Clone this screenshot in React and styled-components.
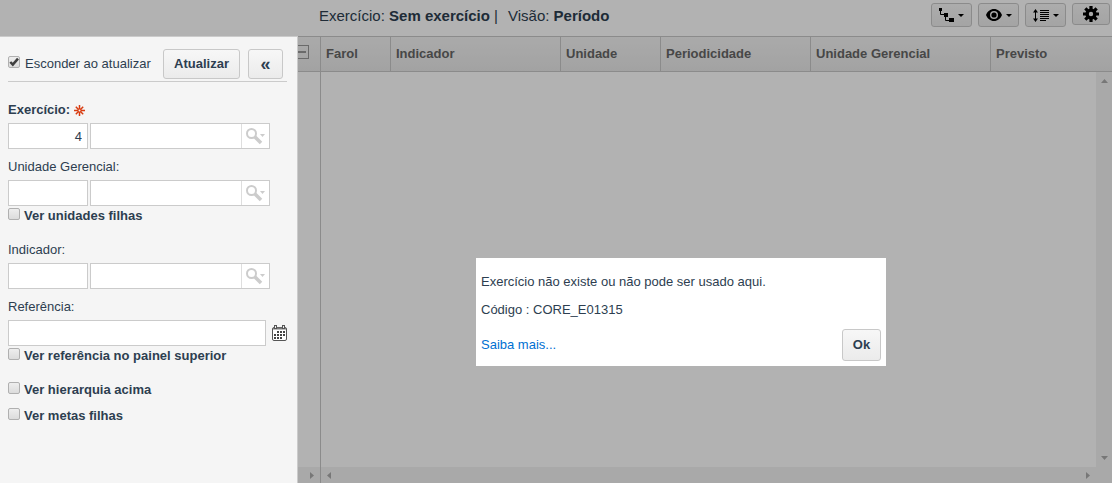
import {useState} from "react";
import styled, {createGlobalStyle, css} from "styled-components";

const GlobalStyle = createGlobalStyle`
  * {
    box-sizing: border-box;
  }
  body {
    margin: 0;
    background: #fff;
    color: #2d3e50;
    font: 13px/16px "Liberation Sans", Arial, sans-serif;
  }
  input, button {
    font: inherit;
    color: inherit;
  }
  svg {
    display: block;
    flex-shrink: 0;
  }
`;

const Page = styled.div`
  display: flex;
  flex-direction: column;
  height: 100vh;
  overflow: hidden;
`;

// Top bar
const TopBar = styled.header`
  display: flex;
  justify-content: space-between;
  height: 36px;
  padding: 3px 2px 0 319px;
`;

const Summary = styled.div`
  display: flex;
  gap: 10px;
  font-size: 15px;
  line-height: 26px;
  white-space: nowrap;
`;

const Tools = styled.div`
  display: flex;
  align-items: flex-start;
  gap: 6px;
`;

const ButtonBase = styled.button`
  display: flex;
  align-items: center;
  justify-content: center;
  padding: 0;
  border: 1px solid #c8c8c8;
  border-radius: 3px;
  background: linear-gradient(#f7f7f7, #ebebeb);
  font-weight: bold;
  cursor: pointer;
`;

const ToolButton = styled(ButtonBase)`
  gap: 4px;
  width: ${props => props.$single ? "38px" : "41px"};
  height: ${props => props.$single ? "22px" : "24px"};
  color: #000;
`;

// Grid
const Body = styled.main`
  position: relative;
  display: flex;
  flex: 1;
  min-height: 0;
`;

const Pane = styled.section`
  display: flex;
  flex-direction: column;
  ${props => props.$frozen ? css`
    width: 321px;
    border-right: 1px solid #c8c8c8;
  ` : css`
    flex: 1;
    min-width: 0;
  `}
`;

const headerCell = css`
  height: 36px;
  border-top: 1px solid #c8c8c8;
  border-bottom: 1px solid #c8c8c8;
  background: linear-gradient(#f4f4f4, #e9e9e9);
`;

const FrozenHeader = styled.div`
  ${headerCell}
  display: flex;
  align-items: center;
  justify-content: flex-end;
  padding: 0 11px 4px 0;
`;

const CollapseButton = styled.button`
  width: 14px;
  height: 14px;
  padding: 0;
  border: 1px solid #999;
  background: none;
  svg {
    margin: 0 auto;
  }
`;

const Table = styled.table`
  width: 100%;
  table-layout: fixed;
  border-collapse: separate;
  border-spacing: 0;
`;

const Th = styled.th`
  ${headerCell}
  width: ${props => props.$width ? `${props.$width}px` : "auto"};
  padding: 0 5px;
  border-right: ${props => props.$width ? "1px solid #c8c8c8" : "0"};
  color: #666;
  text-align: left;
  white-space: nowrap;
`;

const Rows = styled.div`
  display: flex;
  flex: 1;
  justify-content: flex-end;
`;

const ScrollTrack = styled.div`
  display: flex;
  justify-content: space-between;
  align-items: center;
  color: #ababab;
  background: #f3f3f3;
  ${props => props.$vertical ? css`
    flex-direction: column;
    width: 16px;
    padding: 7px 0;
  ` : css`
    height: 16px;
    padding: 0 ${props.$frozen ? "6px" : "22px"} 0 6px;
  `}
`;

// Filter drawer, stays above the backdrop
const Drawer = styled.aside`
  position: absolute;
  z-index: 20;
  top: 0;
  bottom: 0;
  left: 0;
  width: 298px;
  padding: 12px 8px 0;
  border-top: 1px solid #cbcbcb;
  border-right: 1px solid #cbcbcb;
  background: #f5f5f5;
`;

const DrawerHeader = styled.div`
  display: flex;
  gap: 8px;
  width: 279px;
  margin-bottom: 20px;
  padding: 0 4px 2px 0;
  border-bottom: 1px solid #cbcbcb;
`;

const DrawerButton = styled(ButtonBase)`
  width: ${props => props.$icon ? "35px" : "77px"};
  height: 30px;
  font-size: ${props => props.$icon ? "18px" : "13px"};
`;

const CheckLabel = styled.label`
  display: flex;
  gap: 4px;
  font-weight: ${props => props.$light ? "normal" : "bold"};
  white-space: nowrap;
  ${props => props.$light && css`
    flex: 1;
    gap: 5px;
    padding-top: 7px;
  `}
`;

const Checkbox = styled.input`
  appearance: none;
  flex-shrink: 0;
  width: 12px;
  height: 12px;
  margin: 0;
  border: 1px solid #b0b0b0;
  border-radius: 2px;
  background: linear-gradient(#eee, #dcdcdc);
  &:checked {
    background: url("data:image/svg+xml,%3Csvg xmlns='http://www.w3.org/2000/svg' viewBox='0 0 10 10'%3E%3Cpath d='M1.3 5L3.8 7.6L9 1.6' fill='none' stroke='%23404040' stroke-width='2.5'/%3E%3C/svg%3E"), linear-gradient(#eee, #dcdcdc);
  }
`;

const FilterList = styled.div`
  display: flex;
  flex-direction: column;
  gap: 18px;
`;

const FilterGroup = styled.div`
  display: flex;
  flex-direction: column;
  gap: ${props => props.$tight ? "2px" : "10px"};
`;

const FieldBox = styled.div`
  display: flex;
  flex-direction: column;
  gap: 5px;
`;

const FieldLabel = styled.label`
  display: flex;
  align-items: center;
  gap: 4px;
  font-weight: ${props => props.$required ? "bold" : "normal"};
`;

const FieldRow = styled.div`
  display: flex;
  align-items: center;
  gap: ${props => props.$gap}px;
`;

const Input = styled.input`
  width: ${props => props.$width}px;
  height: 26px;
  padding: 0 5px;
  border: 1px solid #cbcbcb;
  background: #fff;
  text-align: ${props => props.$right ? "right" : "left"};
`;

const Lookup = styled.div`
  display: flex;
  width: 180px;
  height: 26px;
  border: 1px solid #cbcbcb;
  background: #fff;
  input {
    flex: 1;
    min-width: 0;
    padding: 0 5px;
    border: 0;
    background: none;
  }
`;

const LookupButton = styled.button`
  width: 28px;
  padding: 0 0 0 4px;
  border: 0;
  border-left: 1px solid #dedede;
  background: none;
`;

const CalendarButton = styled.button`
  padding: 0;
  border: 0;
  background: none;
`;

// Message dialog
const Backdrop = styled.div`
  position: fixed;
  z-index: 10;
  inset: 0;
  display: flex;
  align-items: center;
  justify-content: center;
  padding: 141px 0 0 250px;
  background: rgba(0, 0, 0, 0.3);
`;

const Dialog = styled.div`
  display: flex;
  flex-direction: column;
  width: 410px;
  padding: 14px 5px 5px;
  background: #fff;
  line-height: 20px;
  p {
    margin: 0;
  }
  p + p {
    margin-top: 8px;
  }
`;

const DialogFooter = styled.div`
  display: flex;
  align-items: center;
  justify-content: space-between;
  margin-top: 9px;
  a {
    color: #0070d2;
    text-decoration: none;
  }
`;

const OkButton = styled(ButtonBase)`
  width: 39px;
  height: 32px;
`;

const Caret = () => (
  <svg width="6" height="3" viewBox="0 0 6 3"><path d="M0 0h6L3 3z" fill="currentColor" /></svg>
);

const arrows = {
  up: "M0 4h7L3.5 0z",
  down: "M0 0h7L3.5 4z",
  left: "M4 0v7L0 3.5z",
  right: "M0 0v7l4-3.5z",
};

function Arrow({dir}) {
  const vertical = dir === "up" || dir === "down";
  return (
    <svg width={vertical ? 7 : 4} height={vertical ? 4 : 7}>
      <path d={arrows[dir]} fill="currentColor" />
    </svg>
  );
}

const TreeIcon = () => (
  <svg width="15" height="15" viewBox="0 0 15 15">
    <path d="M0 0h3v3H0zM5 5h4v4H5zM10 10h5v4h-5z" fill="currentColor" />
    <path d="M1.5 2v4.500H6M6.500 8v4.500H11" fill="none" stroke="currentColor" />
  </svg>
);

const EyeIcon = () => (
  <svg width="16" height="12" viewBox="0 0 16 12">
    <path fillRule="evenodd" fill="currentColor" d="M8 0C4.3 0 1.4 2.5 0 6c1.4 3.5 4.3 6 8 6s6.6-2.5 8-6c-1.4-3.5-4.3-6-8-6zm0 2a4 4 0 1 1 0 8 4 4 0 0 1 0-8z" />
    <circle cx="8" cy="6" r="2.6" fill="currentColor" />
  </svg>
);

const LinesIcon = () => (
  <svg width="16" height="13" viewBox="0 0 16 13">
    <path d="M2.5 2v9" stroke="currentColor" />
    <path d="M0 3.5L2.5 0L5 3.5zM0 9.5L2.5 13L5 9.500z" fill="currentColor" />
    <path d="M7 1.500h9M7 3.500h9M7 5.500h9M7 7.500h9M7 9.500h9M7 11.500h6" stroke="currentColor" />
  </svg>
);

const GearIcon = () => (
  <svg width="16" height="16" viewBox="-8 -8 16 16">
    <circle r="3.9" fill="none" stroke="currentColor" strokeWidth="3.4" />
    {[0, 45, 90, 135].map(angle => (
      <path key={angle} d="M-1.6-8h3.2v3.500h-3.2zM-1.6 4.500h3.2V8h-3.2z" fill="currentColor" transform={`rotate(${angle})`} />
    ))}
  </svg>
);

const RequiredIcon = () => (
  <svg width="11" height="12" viewBox="0 0 11 12">
    <path d="M5.5 1v11M0 6.5h11M1.8 2.8l7.4 7.4M9.2 2.8l-7.4 7.4" stroke="#d83b10" strokeWidth="1.5" />
    <circle cx="5.5" cy="6.5" r="1" fill="#f5f5f5" />
  </svg>
);

const SearchIcon = () => (
  <svg width="20" height="17" viewBox="0 0 20 17">
    <circle cx="5.5" cy="5.5" r="4.5" fill="none" stroke="#ccc" strokeWidth="2" />
    <path d="M9 9l6 6" stroke="#ccc" strokeWidth="3.6" />
    <path d="M14 6h5l-2.5 3z" fill="#ccc" />
  </svg>
);

const CalendarIcon = () => (
  <svg width="15" height="16" viewBox="0 0 15 16">
    <rect x="0.5" y="2.5" width="14" height="13" rx="1.5" fill="#fff" stroke="#555" />
    <path d="M1 3.5h13" stroke="#777" strokeWidth="2" />
    <rect x="2.5" y="0.5" width="2" height="3" fill="#eee" stroke="#555" />
    <rect x="10.5" y="0.5" width="2" height="3" fill="#eee" stroke="#555" />
    <path d="M5 7h8M2 10h11M2 13h8" stroke="#444" strokeWidth="2" strokeDasharray="2 1" />
  </svg>
);

const columns = [
  {name: "Farol", width: 70},
  {name: "Indicador", width: 170},
  {name: "Unidade", width: 100},
  {name: "Periodicidade", width: 150},
  {name: "Unidade Gerencial", width: 180},
  {name: "Previsto"},
];

function LookupField({id, label, required, value = ""}) {
  const [code, setCode] = useState(value);
  return (
    <FieldBox>
      <FieldLabel htmlFor={id} $required={required}>
        {label}:{required && <RequiredIcon />}
      </FieldLabel>
      <FieldRow $gap={2}>
        <Input id={id} $width={80} $right value={code} onChange={ev => setCode(ev.target.value)} />
        <Lookup>
          <input aria-label={label} />
          <LookupButton type="button" aria-label={`Pesquisar ${label}`}><SearchIcon /></LookupButton>
        </Lookup>
      </FieldRow>
    </FieldBox>
  );
}

function Check({label}) {
  return (
    <CheckLabel>
      <Checkbox type="checkbox" />
      {label}
    </CheckLabel>
  );
}

function FilterDrawer() {
  return (
    <Drawer>
      <DrawerHeader>
        <CheckLabel $light>
          <Checkbox type="checkbox" defaultChecked />
          Esconder ao atualizar
        </CheckLabel>
        <DrawerButton type="button">Atualizar</DrawerButton>
        <DrawerButton type="button" $icon aria-label="Recolher">«</DrawerButton>
      </DrawerHeader>
      <FilterList>
        <FilterGroup>
          <LookupField id="exercicio" label="Exercício" required value="4" />
          <FilterGroup $tight>
            <LookupField id="unidade" label="Unidade Gerencial" />
            <Check label="Ver unidades filhas" />
          </FilterGroup>
        </FilterGroup>
        <FilterGroup>
          <LookupField id="indicador" label="Indicador" />
          <FilterGroup $tight>
            <FieldBox>
              <FieldLabel htmlFor="referencia">Referência:</FieldLabel>
              <FieldRow $gap={6}>
                <Input id="referencia" $width={258} />
                <CalendarButton type="button" aria-label="Calendário"><CalendarIcon /></CalendarButton>
              </FieldRow>
            </FieldBox>
            <Check label="Ver referência no painel superior" />
          </FilterGroup>
        </FilterGroup>
        <FilterGroup>
          <Check label="Ver hierarquia acima" />
          <Check label="Ver metas filhas" />
        </FilterGroup>
      </FilterList>
    </Drawer>
  );
}

export default function App() {
  const [open, setOpen] = useState(true);
  return (
    <Page>
      <GlobalStyle />
      <TopBar>
        <Summary>
          <span>Exercício: <b>Sem exercício</b> |</span>
          <span>Visão: <b>Período</b></span>
        </Summary>
        <Tools>
          <ToolButton type="button" aria-label="Hierarquia"><TreeIcon /><Caret /></ToolButton>
          <ToolButton type="button" aria-label="Visão"><EyeIcon /><Caret /></ToolButton>
          <ToolButton type="button" aria-label="Altura das linhas"><LinesIcon /><Caret /></ToolButton>
          <ToolButton type="button" $single aria-label="Configurações"><GearIcon /></ToolButton>
        </Tools>
      </TopBar>
      <Body>
        <Pane $frozen>
          <FrozenHeader>
            <CollapseButton type="button" aria-label="Recolher tudo">
              <svg width="8" height="2"><path d="M0 1h8" stroke="#999" strokeWidth="2" /></svg>
            </CollapseButton>
          </FrozenHeader>
          <Rows />
          <ScrollTrack $frozen><Arrow dir="left" /><Arrow dir="right" /></ScrollTrack>
        </Pane>
        <Pane>
          <Table>
            <thead>
              <tr>
                {columns.map(col => <Th key={col.name} scope="col" $width={col.width}>{col.name}</Th>)}
              </tr>
            </thead>
          </Table>
          <Rows>
            <ScrollTrack $vertical><Arrow dir="up" /><Arrow dir="down" /></ScrollTrack>
          </Rows>
          <ScrollTrack><Arrow dir="left" /><Arrow dir="right" /></ScrollTrack>
        </Pane>
        <FilterDrawer />
      </Body>
      {open && (
        <Backdrop>
          <Dialog role="alertdialog" aria-label="Mensagem">
            <p>Exercício não existe ou não pode ser usado aqui.</p>
            <p>Código : CORE_E01315</p>
            <DialogFooter>
              <a href="#saiba-mais">Saiba mais...</a>
              <OkButton type="button" onClick={() => setOpen(false)}>Ok</OkButton>
            </DialogFooter>
          </Dialog>
        </Backdrop>
      )}
    </Page>
  );
}
